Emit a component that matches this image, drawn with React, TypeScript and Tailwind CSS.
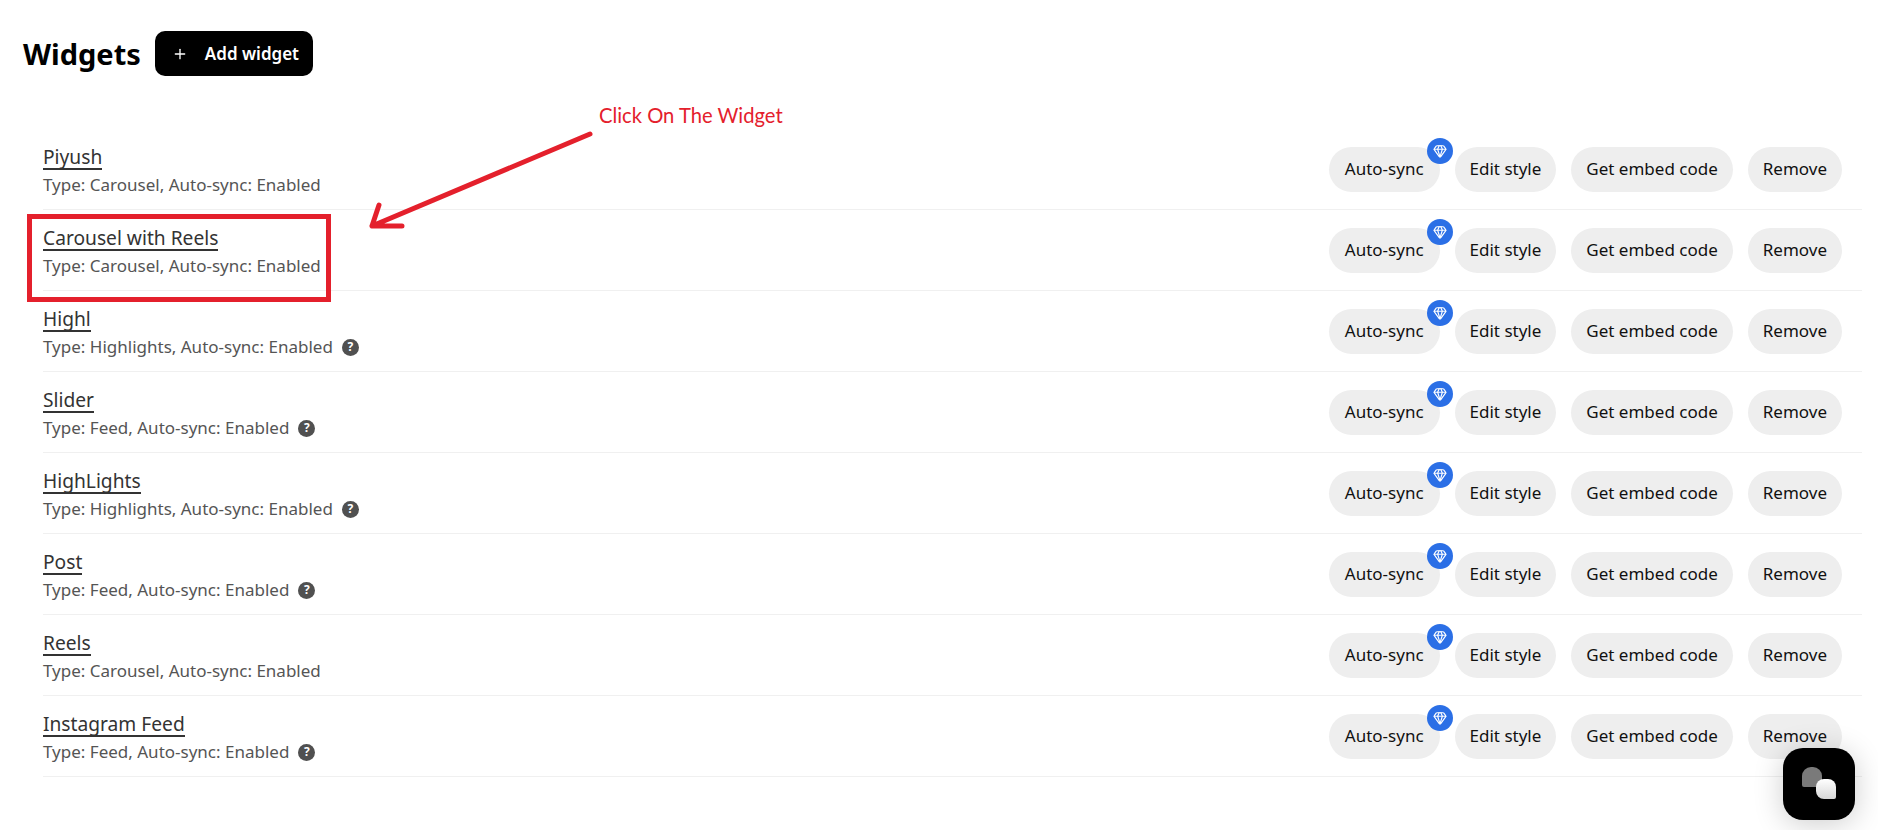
import { Gem, Plus } from "lucide-react";

const widgets = [
  { name: "Piyush", type: "Carousel", help: false },
  { name: "Carousel with Reels", type: "Carousel", help: false },
  { name: "Highl", type: "Highlights", help: true },
  { name: "Slider", type: "Feed", help: true },
  { name: "HighLights", type: "Highlights", help: true },
  { name: "Post", type: "Feed", help: true },
  { name: "Reels", type: "Carousel", help: false },
  { name: "Instagram Feed", type: "Feed", help: true },
];

const PillButton = ({ label, badge }: { label: string; badge?: boolean }) => (
  <button
    className={`relative h-[45px] rounded-full bg-[#eeeeee] text-[17px] text-[#111] whitespace-nowrap ${
      badge ? "px-[16px]" : "px-[15px]"
    }`}
  >
    {label}
    {badge && (
      <span className="absolute -top-[9px] -right-[13px] w-[26px] h-[26px] rounded-full bg-[#2b6fe6] flex items-center justify-center">
        <Gem size={14} color="#fff" strokeWidth={2} />
      </span>
    )}
  </button>
);

const HelpIcon = () => (
  <span className="ml-[9px] w-[17px] h-[17px] rounded-full bg-[#505050] text-white text-[12px] leading-none font-bold flex items-center justify-center">
    ?
  </span>
);

const WidgetRow = ({
  name,
  type,
  help,
}: {
  name: string;
  type: string;
  help: boolean;
}) => (
  <div className="h-[81px] flex items-center justify-between pr-5 border-b border-[#f0f0f0]">
    <div className="flex flex-col items-start pt-[4px]">
      <span className="text-[19.2px] leading-[23px] text-[#333] border-b-2 border-[#333]">
        {name}
      </span>
      <div className="flex items-center mt-[3px] text-[17px] leading-[24px] text-[#555]">
        <span>
          Type: {type}, Auto-sync: Enabled
        </span>
        {help && <HelpIcon />}
      </div>
    </div>
    <div className="flex gap-[15px]">
      <PillButton label="Auto-sync" badge />
      <PillButton label="Edit style" />
      <PillButton label="Get embed code" />
      <PillButton label="Remove" />
    </div>
  </div>
);

const App = () => {
  return (
    <div className="relative w-[1878px] h-[830px] overflow-hidden bg-white font-['Noto_Sans',sans-serif]">
      <div className="flex items-center gap-[14px] pl-[23px] pt-[31px]">
        <h1 className="text-[29px] leading-[45px] font-bold text-black">Widgets</h1>
        <button className="h-[45px] w-[158px] rounded-[10px] bg-black text-white text-[17px] font-semibold flex items-center pl-[17px]">
          <Plus size={16} strokeWidth={2} />
          <span className="ml-[17px]">Add widget</span>
        </button>
      </div>

      <div className="ml-[43px] mr-[16px] mt-[53px]">
        {widgets.map((w) => (
          <WidgetRow key={w.name} name={w.name} type={w.type} help={w.help} />
        ))}
      </div>

      {/* annotation drawn over the screenshot */}
      <div className="absolute left-[27px] top-[214px] w-[304px] h-[88px] border-[5px] border-[#e4202c]" />
      <span className="absolute left-[599px] top-[101px] text-[20.2px] leading-[28px] text-[#e4202c] font-['Lato',sans-serif]">
        Click On The Widget
      </span>
      <svg className="absolute left-0 top-0" width="1878" height="830" fill="none">
        <path
          d="M590 134L372 226M379 205L372 226L402 226"
          stroke="#e4202c"
          strokeWidth="5"
          strokeLinecap="round"
          strokeLinejoin="round"
        />
      </svg>

      <div className="absolute left-[1783px] top-[748px] w-[72px] h-[72px] rounded-[20px] bg-black shadow-[0_4px_30px_rgba(0,0,0,0.2)]">
        <div className="absolute left-[19px] top-[19px] w-5 h-5 rounded-t-[9px] rounded-bl-[2px] bg-[#7a7a7a]" />
        <div className="absolute left-[33px] top-[31px] w-5 h-5 rounded-[8px] rounded-br-[2px] bg-gradient-to-b from-white to-[#d8d8d8]" />
      </div>
    </div>
  );
};

export default App;
